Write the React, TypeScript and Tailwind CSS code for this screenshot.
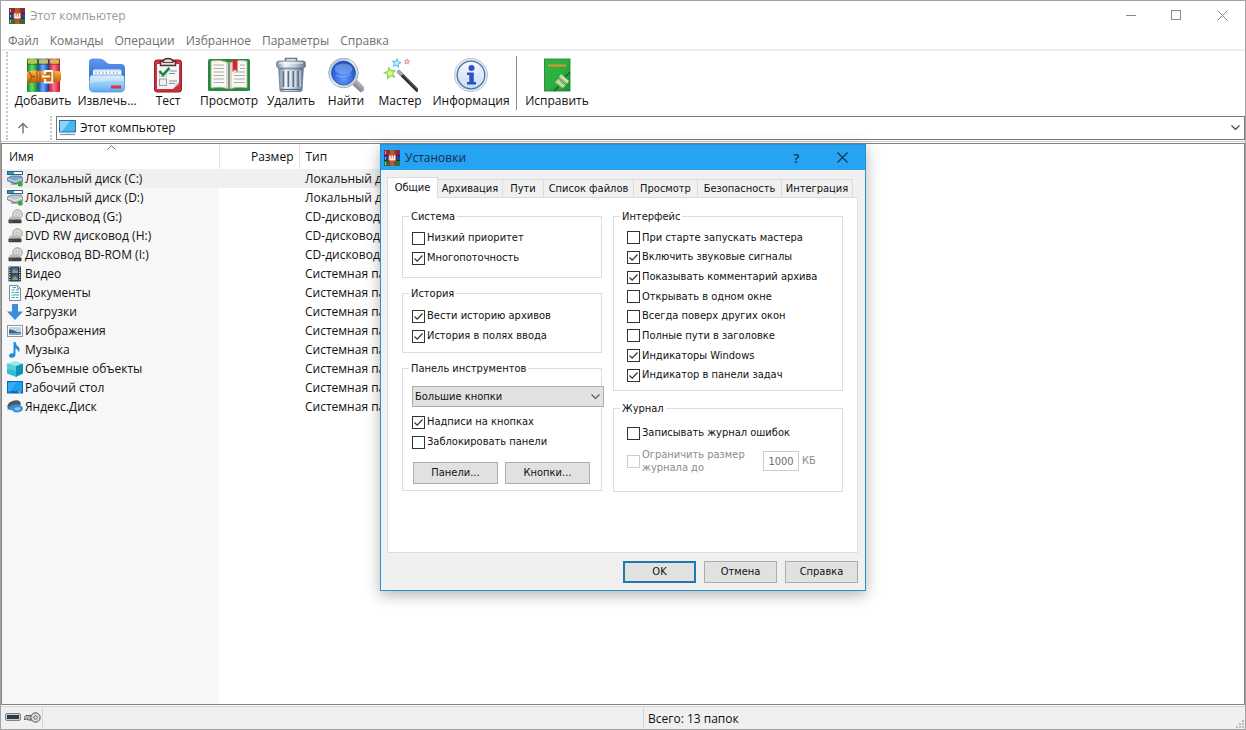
import React, { ReactNode, useState } from "react";

function BooksIcon({ className }: { className: string }) {
  return (
    <svg viewBox="0 0 36 36" className={className} aria-hidden="true">
      <defs>
        <linearGradient id="bkG"><stop offset="0" stopColor="#0f8426" /><stop offset=".45" stopColor="#5fe070" /><stop offset="1" stopColor="#0f7a24" /></linearGradient>
        <linearGradient id="bkB"><stop offset="0" stopColor="#174bb0" /><stop offset=".45" stopColor="#6aaef8" /><stop offset="1" stopColor="#123a9a" /></linearGradient>
        <linearGradient id="bkR"><stop offset="0" stopColor="#c41c38" /><stop offset=".45" stopColor="#ff7484" /><stop offset="1" stopColor="#bd142e" /></linearGradient>
        <linearGradient id="bkS" x2="0" y2="1"><stop offset="0" stopColor="#f9bf5c" /><stop offset=".5" stopColor="#e8871c" /><stop offset="1" stopColor="#b96010" /></linearGradient>
      </defs>
      <rect x="2" y="1.500" width="11" height="33.500" rx="1" fill="url(#bkG)" />
      <rect x="13" y="1.500" width="11" height="33.500" rx="1" fill="url(#bkB)" />
      <rect x="24" y="1.500" width="11" height="33.500" rx="1" fill="url(#bkR)" />
      <g fill="#cdbf4a">
        <rect x="3" y="2.500" width="9" height="4" /><rect x="14" y="2.500" width="9" height="4" /><rect x="25" y="2.500" width="9" height="4" />
      </g>
      <path d="M2 7.500H35" stroke="#1a3a30" strokeWidth="1" opacity=".4" />
      <path d="M2 15Q8 12 13 14H33Q36 14 36 18V22Q36 25 33 25H13Q8 27 2 25Z" fill="url(#bkS)" />
      <path d="M4 15Q9 20 4 25M12 14V25M15 14V25" fill="none" stroke="#a8560c" strokeWidth="1.200" />
      <circle cx="8.500" cy="19.500" r="1" fill="#7a3c06" />
      <path d="M20 17V14H27.500V25.500H20V22" fill="#c46c16" stroke="#f8f4ee" strokeWidth="2.200" />
      <path d="M17 19.500H25" stroke="#fff6dc" strokeWidth="2" />
      <path d="M28.800 13.500V26" stroke="#6f4318" strokeWidth=".6" />
    </svg>
  );
}

function AppIcon() {
  return (
    <svg viewBox="0 0 16 16" className="size-4 shrink-0" aria-hidden="true">
      <rect width="16" height="5.500" fill="#8e2440" />
      <rect y="5.500" width="16" height="5" fill="#2b3f98" />
      <rect y="10.500" width="16" height="5.500" fill="#1e7340" />
      <path d="M0 5.500H16M0 10.500H16" stroke="#2a1530" strokeWidth=".8" />
      <path d="M1.500 1V4.500M1.500 7V9.500M1.500 12V15" stroke="#d8c8c0" strokeWidth=".8" />
      <rect x="5" width="6.500" height="16" fill="#a85f33" />
      <path d="M5.500 0V16M11 0V16" stroke="#64301c" strokeWidth=".7" />
      <rect x="4.500" y="4.500" width="7.500" height="6.500" rx="1" fill="#d86a32" />
      <path d="M6 5.500V9.500H10.500V5.500M8.250 6V9.500" fill="none" stroke="#fff" strokeWidth="1.300" />
    </svg>
  );
}

function ExtractIcon() {
  return (
    <svg viewBox="0 0 36 36" className="size-9" aria-hidden="true">
      <defs>
        <linearGradient id="fo1" x2="0" y2="1"><stop offset="0" stopColor="#5c9af0" /><stop offset="1" stopColor="#3468d0" /></linearGradient>
        <linearGradient id="fo2" x2="0" y2="1"><stop offset="0" stopColor="#c8e6fc" /><stop offset=".5" stopColor="#95cdf8" /><stop offset="1" stopColor="#5fa9f0" /></linearGradient>
      </defs>
      <path d="M0 5Q0 1.500 4 1.500H10Q14 1.500 16 4Q18 7 21 7H32Q36 7 36 11V24H0Z" fill="url(#fo1)" />
      <path d="M4 14Q4 12.500 5.500 12.500H31Q32.500 12.500 32.500 14V22H4Z" fill="#f6faff" />
      <path d="M6.500 15.500H31" stroke="#7f93b4" strokeWidth="2" strokeDasharray="1 2.500" />
      <path d="M5 13.500H32" stroke="#cfdcee" strokeWidth=".8" />
      <path d="M.500 21Q.500 18 3.500 18H32.500Q35.500 18 35.500 21V31Q35.500 35 31 35H5Q.500 35 .500 31Z" fill="url(#fo2)" stroke="#4a8fe0" strokeWidth=".7" />
      <path d="M1 26Q18 23 35 24V20Q35 18.500 32.500 18.500H3.500Q1 18.500 1 21Z" fill="#fff" opacity=".3" />
      <rect x="22" y="28.500" width="10" height="3" fill="#d9363c" />
    </svg>
  );
}

function TestIcon() {
  return (
    <svg viewBox="0 0 36 36" className="size-9" aria-hidden="true">
      <rect x="4.500" y="3" width="27" height="32" rx="2.500" fill="#c8323c" stroke="#96202b" />
      <path d="M7 7H29V25L23 32H7Z" fill="#f6f6f8" />
      <path d="M29 25Q25 26 25 30L23 32L29 27Z" fill="#c4c4ce" />
      <path d="M10.500 8.500V4.500H13Q14 1.500 18 1.500T23 4.500H25.500V8.500Z" fill="#e2dcdc" stroke="#5a3034" strokeWidth="1.400" />
      <path d="M13 5.500H23" stroke="#6b4044" strokeWidth="1" />
      <path d="M9.500 13.500V19.500H16.500V17" fill="none" stroke="#b7bcc4" strokeWidth=".8" />
      <path d="M9.500 14L13 18L19.500 11" fill="none" stroke="#1c8a48" strokeWidth="2.600" />
      <rect x="9.500" y="22" width="7" height="6.500" fill="#f0f0f0" stroke="#9a9ea6" strokeWidth="1" />
      <path d="M20 14H27M19 16.500H25M19 24H27M19 26.500H25" stroke="#8a8e9c" strokeWidth="1" />
    </svg>
  );
}

function ViewIcon() {
  return (
    <svg viewBox="0 0 42 36" className="h-9 w-11" aria-hidden="true">
      <path d="M0 4Q0 2 2 2H40Q42 2 42 4V33Q42 34 40 34H2Q0 34 0 33Z" fill="#258a3c" />
      <path d="M3 4Q13 2 21 6Q29 2 39 4V31Q29 29 21 32Q13 29 3 31Z" fill="#f8f8f2" stroke="#a9ad9c" strokeWidth=".8" />
      <path d="M21 6V32" stroke="#5d6254" strokeWidth="1.400" />
      <path d="M19 6V31M23 6V31" stroke="#cfd2c4" strokeWidth="1.600" />
      <path d="M5.500 8H16M5.500 11.500H16M5.500 15H16M5.500 18.500H16M5.500 22H16M5.500 25.500H16M26 15H37M26 18.500H37M26 22H37M26 25.500H37M32 8H37M32 11.500H37" stroke="#aeb0b0" strokeWidth="1.100" />
      <path d="M24.500 2.500H29.500V15L27 12.500L24.500 15Z" fill="#cc2a2e" />
    </svg>
  );
}

function DeleteIcon() {
  return (
    <svg viewBox="0 0 36 36" className="size-9" aria-hidden="true">
      <defs>
        <linearGradient id="tr1"><stop offset="0" stopColor="#7a8ba2" /><stop offset=".3" stopColor="#f0f5fa" /><stop offset=".65" stopColor="#bccad9" /><stop offset="1" stopColor="#65758d" /></linearGradient>
      </defs>
      <path d="M12.500 4V1.500H23.500V4" fill="none" stroke="#70797f" strokeWidth="1.600" />
      <path d="M5.500 9H30.500L29 33Q29 34.500 27 34.500H9Q7 34.500 7 33Z" fill="url(#tr1)" stroke="#66768d" strokeWidth=".8" />
      <path d="M10.500 14V30M15.500 14V30M20.500 14V30M25.500 14V30" stroke="#5d6e86" strokeWidth="2" />
      <path d="M12 14V30M17 14V30M22 14V30M27 14V30" stroke="#f4f8fb" strokeWidth=".9" />
      <path d="M7 12H29" stroke="#51617a" strokeWidth="1.200" opacity=".6" />
      <rect x="3.500" y="4" width="29" height="7" rx="2.500" fill="url(#tr1)" stroke="#66768d" strokeWidth=".8" />
      <path d="M6 6H30" stroke="#fff" strokeWidth="1.200" opacity=".8" />
      <path d="M7.500 32.500H28.500" stroke="#56667c" strokeWidth="1.200" />
    </svg>
  );
}

function FindIcon() {
  return (
    <svg viewBox="0 0 36 36" className="size-9" aria-hidden="true">
      <defs>
        <radialGradient id="ln" cx=".5" cy=".75" r=".7"><stop offset="0" stopColor="#5f9af8" /><stop offset=".6" stopColor="#3067dc" /><stop offset="1" stopColor="#2350b8" /></radialGradient>
        <linearGradient id="hn" x1="1" x2="0" y2="1"><stop offset="0" stopColor="#eeeeef" /><stop offset=".5" stopColor="#9a9ca0" /><stop offset="1" stopColor="#4c4e52" /></linearGradient>
        <linearGradient id="rg" x2="1" y2="1"><stop offset="0" stopColor="#8db6de" /><stop offset=".5" stopColor="#f2f6fa" /><stop offset="1" stopColor="#b4bec8" /></linearGradient>
      </defs>
      <path d="M24 27L28.500 23L36.500 31Q36 34 32.500 35Z" fill="url(#hn)" stroke="#77797e" strokeWidth=".6" />
      <circle cx="15.500" cy="16" r="14.800" fill="url(#rg)" stroke="#8aa4bd" strokeWidth=".8" />
      <circle cx="15.500" cy="16" r="12" fill="url(#ln)" stroke="#3a5f9c" strokeWidth=".9" />
      <ellipse cx="15.500" cy="12" rx="9" ry="5.500" fill="#a8c8fc" opacity=".45" />
      <path d="M8 18Q15 22 23 17" stroke="#9cc0fa" strokeWidth="1" fill="none" opacity=".7" />
    </svg>
  );
}

function WizardIcon() {
  const star = "M0 -6L1.700 -2.100L6 -1.700L2.800 1.200L3.800 5.400L0 3.200L-3.800 5.400L-2.800 1.200L-6 -1.700L-1.700 -2.100Z";
  return (
    <svg viewBox="0 0 36 36" className="size-9" aria-hidden="true">
      <path d="M16 14L36 34" stroke="#2c2d31" strokeWidth="3.600" />
      <path d="M17.500 14L36.500 33" stroke="#85878d" strokeWidth=".9" />
      <path d="M15.500 13.500L20 18" stroke="#a6a8ad" strokeWidth="3.600" />
      <path d={star} transform="translate(8 16) rotate(-12) scale(.9)" fill="#d4f59a" stroke="#86cf48" strokeWidth="1.200" />
      <path d={star} transform="translate(14.500 6) rotate(10) scale(.68)" fill="#c6f0ff" stroke="#58bfe8" strokeWidth="1.400" />
      <path d={star} transform="translate(25 4.500) rotate(8) scale(.45)" fill="#ffdada" stroke="#e48683" strokeWidth="1.800" />
    </svg>
  );
}

function InfoIcon() {
  return (
    <svg viewBox="0 0 36 36" className="size-9" aria-hidden="true">
      <defs><linearGradient id="inf" x2="0" y2="1"><stop offset="0" stopColor="#f6fafe" /><stop offset="1" stopColor="#c6daf4" /></linearGradient></defs>
      <circle cx="18" cy="18" r="16.500" fill="#dde8f6" stroke="#b4c8e4" strokeWidth="1" />
      <circle cx="18" cy="18" r="13.800" fill="url(#inf)" stroke="#54719f" strokeWidth="1.300" />
      <circle cx="18.500" cy="11" r="3" fill="#2e50c0" />
      <path d="M14 15.500H20.800V25H23V27.500H14V25H16.300V18H14Z" fill="#2e50c0" />
    </svg>
  );
}

function RepairIcon() {
  return (
    <svg viewBox="0 0 36 36" className="size-9" aria-hidden="true">
      <defs><linearGradient id="rp" y2="1"><stop offset="0" stopColor="#35b33c" /><stop offset=".5" stopColor="#2cb040" /><stop offset="1" stopColor="#1c9232" /></linearGradient></defs>
      <rect x="5.500" y="2" width="25.500" height="32" fill="url(#rp)" stroke="#177d2b" strokeWidth=".8" />
      <path d="M9 8.500H27" stroke="#e0962a" strokeWidth="2" />
      <path d="M31 15L26 20M20 29L15 34" stroke="#0c6420" strokeWidth="1.200" />
      <path d="M22 17L30 24L27.500 27.500L19.500 20.500Z" fill="#d3dba8" />
      <path d="M18.500 22.500L26 29L23.500 31.500L16 25.500Z" fill="#d3dba8" />
      <path d="M20 19.800L28 26.800M16.500 25L24 31" stroke="#6f8f4a" strokeWidth=".8" />
      <path d="M19 22L26.500 28.500" stroke="#eef2d0" strokeWidth=".8" />
    </svg>
  );
}

const tools: { label: string; width: string; icon: ReactNode }[] = [
  { label: "Добавить", width: "w-[62px]", icon: <BooksIcon className="size-9" /> },
  { label: "Извлечь...", width: "w-[66px]", icon: <ExtractIcon /> },
  { label: "Тест", width: "w-14", icon: <TestIcon /> },
  { label: "Просмотр", width: "w-[66px]", icon: <ViewIcon /> },
  { label: "Удалить", width: "w-[58px]", icon: <DeleteIcon /> },
  { label: "Найти", width: "w-[52px]", icon: <FindIcon /> },
  { label: "Мастер", width: "w-14", icon: <WizardIcon /> },
  { label: "Информация", width: "w-[86px]", icon: <InfoIcon /> },
];

function Tool({ label, width, icon }: { label: string; width: string; icon: ReactNode }) {
  return (
    <button type="button" className={`flex shrink-0 flex-col items-center gap-0 whitespace-nowrap ${width}`}>
      {icon}
      <span className="leading-4">{label}</span>
    </button>
  );
}

function HardDisk({ tint }: { tint: string }) {
  return (
    <svg viewBox="0 0 16 16" className="size-4 shrink-0" aria-hidden="true">
      <rect x=".5" y=".5" width="15" height="3" fill="#fff" stroke="#35607e" />
      <rect x="1" y="1" width="6" height="2" fill="#2495d6" />
      <path d="M0 7.500L4 5H14L16 7.500V10L12 12.500H7L0 9.500Z" fill={tint} stroke="#586c7c" strokeWidth=".8" />
      <path d="M1 8L8 10.500L15 8" stroke="#e4eef4" strokeWidth=".8" fill="none" />
      <path d="M4 13H10" stroke="#5f6d77" strokeWidth="1" />
      <circle cx="13.200" cy="13" r="2.600" fill="#2fae3c" />
    </svg>
  );
}

function Disc() {
  return (
    <svg viewBox="0 0 16 16" className="size-4 shrink-0" aria-hidden="true">
      <circle cx="10.500" cy="5.500" r="4.700" fill="#dcdcdc" stroke="#8d8d8d" strokeWidth=".9" />
      <circle cx="10.500" cy="5.500" r="1.500" fill="#fff" stroke="#8d8d8d" strokeWidth=".7" />
      <path d="M3 7.500H12L14.500 10.500H1.500Z" fill="#b4b4b4" opacity=".85" />
      <rect x="1.500" y="10.500" width="13" height="3.700" rx=".6" fill="#3f4143" />
      <path d="M3.500 12.500H4.500" stroke="#46d060" strokeWidth="1" />
    </svg>
  );
}

const small = "size-4 shrink-0";
const icons: Record<string, ReactNode> = {
  c: <HardDisk tint="#7fa9c8" />,
  d: <HardDisk tint="#c4c8cb" />,
  disc: <Disc />,
  video: (
    <svg viewBox="0 0 16 16" className={small} aria-hidden="true">
      <rect x="1.500" y=".5" width="12.500" height="15" fill="#2b3038" />
      <path d="M2.800 1V16M12.700 1V16" stroke="#e2e6ea" strokeWidth="1.200" strokeDasharray="1.300 1.100" />
      <rect x="4.500" y="1.500" width="6.500" height="6" fill="#3d6fb6" />
      <rect x="4.500" y="8.500" width="6.500" height="6" fill="#35629e" />
      <path d="M5 6L7 3L9 5L11 4V7H5ZM5 13L8 10L11 13V14H5Z" fill="#9a9a55" />
    </svg>
  ),
  docs: (
    <svg viewBox="0 0 16 16" className={small} aria-hidden="true">
      <path d="M2.500 .5H10.500L13.500 3.500V15.500H2.500Z" fill="#fff" stroke="#7d8a92" />
      <path d="M10.500 .5V3.500H13.500" fill="none" stroke="#7d8a92" strokeWidth=".8" />
      <path d="M5.500 2.500H9M4.500 5H8M9 5H12M4.500 7.500H7M8 7.500H12M4.500 10H12M4.500 12.500H8M9 12.500H11.500" stroke="#38a1c6" strokeWidth="1.200" />
    </svg>
  ),
  down: (
    <svg viewBox="0 0 16 16" className={small} aria-hidden="true">
      <path d="M5 0H11V7.500H16L8 16L0 7.500H5Z" fill="#3b8edb" />
    </svg>
  ),
  pics: (
    <svg viewBox="0 0 16 16" className={small} aria-hidden="true">
      <rect x=".5" y="2.500" width="15" height="11" fill="#fff" stroke="#8d979e" />
      <rect x="2" y="4" width="12" height="8" fill="#b4d8ee" />
      <path d="M2 6.500Q5 6 8 8T14 9V10.500H2Z" fill="#3c6381" />
      <path d="M2 10.500H14V12H2Z" fill="#76a6c8" />
    </svg>
  ),
  music: (
    <svg viewBox="0 0 16 16" className={small} aria-hidden="true">
      <path d="M6.500 0H8.500Q9 3 11 4.500Q14 7 11.500 11Q12 7.500 8.500 6.500V13Q8 15.800 5 15.800Q2 15.800 2 13.500Q2.500 11 6.500 11.200Z" fill="#1f8fdd" />
    </svg>
  ),
  cube: (
    <svg viewBox="0 0 16 16" className={small} aria-hidden="true">
      <path d="M0 2.500L8 0L16 2.500L9 5Z" fill="#9ce8ee" />
      <path d="M0 2.500L9 5V16L0 12.500Z" fill="#32bdd2" />
      <path d="M9 5L16 2.500V12.500L9 16Z" fill="#0f93b4" />
      <path d="M0 2.500L9 5V10L0 8Z" fill="#6fd8e2" opacity=".6" />
    </svg>
  ),
  desk: (
    <svg viewBox="0 0 16 16" className={small} aria-hidden="true">
      <rect x=".5" y="1.500" width="15" height="11.500" fill="#1b9ff0" stroke="#1468a8" />
      <path d="M1 3L10 2L3 12H1Z" fill="#49b8fa" opacity=".6" />
      <path d="M1 12H15" stroke="#0b4f85" strokeWidth="1.200" />
      <path d="M2 12H3M11 12H14" stroke="#d7efff" strokeWidth=".9" />
    </svg>
  ),
  yandex: (
    <svg viewBox="0 0 16 16" className={small} aria-hidden="true">
      <ellipse cx="7" cy="6" rx="7" ry="4.300" fill="#4a5864" transform="rotate(-22 7 6)" />
      <path d="M0 11Q2 6 8 5.500Q15 5 16 9.500Q15.500 13.500 9 13.500Q7 13.500 5.500 11.500Q3 10 0 11Z" fill="#3f8edb" />
      <path d="M7 9.500Q10 7.500 13.500 8.500Q14 11 10.500 11.500Q7.500 11.500 7 9.500Z" fill="#8fc2f0" />
    </svg>
  ),
};

const rows: [string, string, string][] = [
  ["c", "Локальный диск (C:)", "Локальный диск"],
  ["d", "Локальный диск (D:)", "Локальный диск"],
  ["disc", "CD-дисковод (G:)", "CD-дисковод"],
  ["disc", "DVD RW дисковод (H:)", "CD-дисковод"],
  ["disc", "Дисковод BD-ROM (I:)", "CD-дисковод"],
  ["video", "Видео", "Системная папка"],
  ["docs", "Документы", "Системная папка"],
  ["down", "Загрузки", "Системная папка"],
  ["pics", "Изображения", "Системная папка"],
  ["music", "Музыка", "Системная папка"],
  ["cube", "Объемные объекты", "Системная папка"],
  ["desk", "Рабочий стол", "Системная папка"],
  ["yandex", "Яндекс.Диск", "Системная папка"],
];

function FileTable() {
  return (
    <table className="h-full w-full table-fixed border-collapse text-left">
      <colgroup>
        <col className="w-[217px]" />
        <col className="w-20" />
        <col className="w-44" />
        <col />
      </colgroup>
      <thead>
        <tr className="h-[25px]">
          <th className="relative border-r border-[#e3e3e3] p-0 pl-[7px] font-normal">
            Имя
            <svg viewBox="0 0 9 5" className="absolute left-[105px] top-px h-[5px] w-[9px]" aria-hidden="true">
              <path d="M.5 4.500L4.500 .7L8.500 4.500" fill="none" stroke="#6b6b6b" />
            </svg>
          </th>
          <th className="border-r border-[#e3e3e3] p-0 pr-[5px] text-right font-normal">Размер</th>
          <th className="p-0 pl-[6px] font-normal">Тип</th>
          <td />
        </tr>
      </thead>
      <tbody>
        {rows.map(([icon, name, type], i) => (
          <tr key={name} className="h-[19px]">
            <td className={`p-0 ${i === 0 ? "bg-[#f0f0f0]" : "bg-[#f7f7f7]"}`}>
              <div className="flex h-[19px] items-center gap-[2px] whitespace-nowrap pl-[5px]">
                {icons[icon]}
                {name}
              </div>
            </td>
            <td className={`p-0 ${i === 0 ? "bg-[#f0f0f0]" : ""}`} />
            <td className={`truncate p-0 pl-[6px] leading-[19px] ${i === 0 ? "bg-[#f0f0f0]" : ""}`}>{type}</td>
            <td />
          </tr>
        ))}
        <tr className="h-full">
          <td className="bg-[#f7f7f7]" />
          <td colSpan={3} />
        </tr>
      </tbody>
    </table>
  );
}

function Check({ label, checked = false }: { label: string; checked?: boolean }) {
  const [on, setOn] = useState(checked);
  return (
    <label className="flex h-5 items-center gap-[2px] whitespace-nowrap">
      <span className="grid size-[13px] shrink-0 place-items-center">
        <input
          type="checkbox"
          checked={on}
          onChange={() => setOn(!on)}
          className="col-start-1 row-start-1 size-[13px] appearance-none border border-[#333] bg-white"
        />
        {on && (
          <svg viewBox="0 0 13 13" className="pointer-events-none col-start-1 row-start-1 size-[13px]" aria-hidden="true">
            <path d="M2.500 6.500L5.200 9.200L10.500 3.500" fill="none" stroke="#333" strokeWidth="1.200" />
          </svg>
        )}
      </span>
      {label}
    </label>
  );
}

function Group({ title, className, legend, children }: { title: string; className: string; legend: string; children: ReactNode }) {
  return (
    <fieldset className={`min-w-0 border border-[#dcdcdc] ${className}`}>
      <legend className={`h-[14px] px-[2px] leading-4 ${legend}`}>{title}</legend>
      {children}
    </fieldset>
  );
}

const pushButton = "h-[22px] border border-[#adadad] bg-[#e1e1e1] text-center";

const tabs: [string, string][] = [
  ["Архивация", "w-[65px]"],
  ["Пути", "w-[41px]"],
  ["Список файлов", "w-[90px]"],
  ["Просмотр", "w-16"],
  ["Безопасность", "w-[84px]"],
  ["Интеграция", "w-[71px]"],
];

const options: [string, boolean][] = [
  ["При старте запускать мастера", false],
  ["Включить звуковые сигналы", true],
  ["Показывать комментарий архива", true],
  ["Открывать в одном окне", false],
  ["Всегда поверх других окон", false],
  ["Полные пути в заголовке", false],
  ["Индикаторы Windows", true],
  ["Индикатор в панели задач", true],
];

function SettingsDialog() {
  return (
    <div
      role="dialog"
      aria-label="Установки"
      className="w-[486px] border border-[#2a8fd0] bg-[#f0f0f0] font-['DejaVu_Sans_Condensed','DejaVu_Sans',sans-serif] text-[11px] shadow-[0_4px_14px_rgba(0,0,0,0.3)]"
    >
      <div className="flex h-[25px] items-center bg-[#26a3f3] pl-[3px] font-['Open_Sans',sans-serif] text-[12px]">
        <AppIcon />
        <span className="ml-[5px] flex-1 text-[#0f2f4c]">Установки</span>
        <button type="button" aria-label="Помощь" className="w-[45px] text-[13px] font-semibold text-[#12334e]">?</button>
        <button type="button" aria-label="Закрыть" className="flex w-[46px] justify-center">
          <svg viewBox="0 0 11 11" className="size-[11px]" aria-hidden="true"><path d="M.5 .5L10.500 10.500M10.500 .5L.5 10.500" stroke="#12334e" strokeWidth="1.100" /></svg>
        </button>
      </div>
      <div className="pb-[7px] pl-[6px] pr-[7px] pt-[7px]">
        <div role="tablist" className="flex h-5 items-end">
          <button type="button" role="tab" aria-selected="true" className="z-10 -mb-px h-[21px] w-[51px] border border-b-0 border-[#dcdcdc] bg-white">Общие</button>
          {tabs.map(([name, width]) => (
            <button key={name} type="button" role="tab" aria-selected="false" className={`h-[18px] whitespace-nowrap border-r border-t border-[#dcdcdc] pt-px ${width}`}>{name}</button>
          ))}
        </div>
        <div className="flex h-[356px] items-start gap-[11px] border border-[#dcdcdc] bg-white pl-[14px] pt-[11px]">
          <div className="w-[200px] space-y-2">
            <Group title="Система" className="pb-[9px] pl-[9px]" legend="-ml-[3px]">
              <div className="pt-[5px]">
                <Check label="Низкий приоритет" />
                <Check label="Многопоточность" checked />
              </div>
            </Group>
            <Group title="История" className="pb-[6px] pl-[9px]" legend="-ml-[3px]">
              <div className="pt-[6px]">
                <Check label="Вести историю архивов" checked />
                <Check label="История в полях ввода" checked />
              </div>
            </Group>
            <Group title="Панель инструментов" className="pb-[6px] pl-[9px]" legend="-ml-[3px]">
              <div className="pt-[11px]">
                <div className="relative mb-[5px] w-48">
                  <select aria-label="Размер кнопок" className="h-[21px] w-full appearance-none border border-[#adadad] bg-[#e1e1e1] px-[2px]">
                    <option>Большие кнопки</option>
                    <option>Маленькие кнопки</option>
                  </select>
                  <svg viewBox="0 0 9 6" className="pointer-events-none absolute right-1 top-2 h-[6px] w-[9px]" aria-hidden="true"><path d="M.5 .5L4.500 4.500L8.500 .5" fill="none" stroke="#555" strokeWidth="1.100" /></svg>
                </div>
                <Check label="Надписи на кнопках" checked />
                <Check label="Заблокировать панели" />
                <div className="mt-[10px] flex gap-[7px] pl-px">
                  <button type="button" className={`w-[85px] ${pushButton}`}>Панели...</button>
                  <button type="button" className={`w-[85px] ${pushButton}`}>Кнопки...</button>
                </div>
              </div>
            </Group>
          </div>
          <div className="w-[230px] space-y-[10px]">
            <Group title="Интерфейс" className="pb-[5px] pl-[13px]" legend="-ml-[7px]">
              <div className="flex h-[162px] flex-col justify-between pt-[5px]">
                {options.map(([label, checked]) => (
                  <Check key={label} label={label} checked={checked} />
                ))}
              </div>
            </Group>
            <Group title="Журнал" className="pb-[17px] pl-[13px]" legend="-ml-[7px]">
              <div className="pt-2">
                <Check label="Записывать журнал ошибок" />
                <div className="mt-[5px] flex items-center text-[#8c8c8c]">
                  <label className="flex w-[136px] items-center gap-[2px] leading-[13px]">
                    <input type="checkbox" disabled className="size-[13px] shrink-0 appearance-none border border-[#ccc] bg-white" />
                    <span>Ограничить размер журнала до</span>
                  </label>
                  <input aria-label="Размер журнала, КБ" disabled defaultValue="1000" className="h-5 w-9 border border-[#ccc] bg-white px-0 text-center text-[#6d6d6d]" />
                  <span className="pl-[3px]">КБ</span>
                </div>
              </div>
            </Group>
          </div>
        </div>
        <div className="mt-2 flex justify-end gap-2">
          <button type="button" className="h-[22px] w-[73px] border-2 border-[#2277ad] bg-[#e1e1e1]">OK</button>
          <button type="button" className={`w-[73px] ${pushButton}`}>Отмена</button>
          <button type="button" className={`w-[73px] ${pushButton}`}>Справка</button>
        </div>
      </div>
    </div>
  );
}

const menu = ["Файл", "Команды", "Операции", "Избранное", "Параметры", "Справка"];

export default function App() {
  return (
    <div className="relative flex h-screen min-h-[620px] flex-col overflow-hidden border border-[#a3a3a3] bg-white font-['Open_Sans','Noto_Sans',sans-serif] text-[12px] leading-4 text-[#111]">
      <header className="flex h-[29px] items-center pl-2 text-[#9a9a9a]">
        <AppIcon />
        <h1 className="ml-[5px] flex-1">Этот компьютер</h1>
        <button type="button" aria-label="Свернуть" className="flex w-[46px] justify-center">
          <svg viewBox="0 0 11 11" className="size-[11px]" aria-hidden="true"><path d="M0 5.500H10" stroke="#8a8a8a" /></svg>
        </button>
        <button type="button" aria-label="Развернуть" className="flex w-[45px] justify-center">
          <svg viewBox="0 0 11 11" className="size-[11px]" aria-hidden="true"><rect x=".5" y=".5" width="9" height="9" fill="none" stroke="#8a8a8a" /></svg>
        </button>
        <button type="button" aria-label="Закрыть" className="flex w-[46px] justify-center">
          <svg viewBox="0 0 11 11" className="size-[11px]" aria-hidden="true"><path d="M.5 .5L10.500 10.500M10.500 .5L.5 10.500" stroke="#8a8a8a" /></svg>
        </button>
      </header>

      <nav className="flex h-[21px] items-center gap-[11px] border-b-2 border-[#eee] pl-[7px] pt-[2px] text-[#6e6e6e]">
        {menu.map((m) => (
          <button key={m} type="button">{m}</button>
        ))}
      </nav>

      <div className="flex h-[91px] border-b border-[#ccc] pl-[5px]">
        <div className="my-px w-0 border-l-2 border-dotted border-[#c4c4c4]" />
        <div className="flex min-w-0 flex-1 flex-col">
          <div className="flex h-[65px] items-start pl-1 pt-[6px]">
            {tools.map((t) => (
              <Tool key={t.label} {...t} />
            ))}
            <div className="-mt-px ml-[2px] mr-[5px] h-[54px] w-px bg-[#8b8b8b]" />
            <Tool label="Исправить" width="w-[70px]" icon={<RepairIcon />} />
          </div>
          <div className="flex h-6 items-stretch">
            <button type="button" aria-label="Вверх" className="flex w-[30px] items-center justify-center">
              <svg viewBox="0 0 12 12" className="size-3" aria-hidden="true"><path d="M6 11.500V1.500M1.500 6L6 1.500L10.500 6" fill="none" stroke="#7a7a7a" strokeWidth="1.500" /></svg>
            </button>
            <div className="ml-3 w-0 border-l-2 border-dotted border-[#c4c4c4]" />
            <div className="ml-1 flex flex-1 items-center border border-[#7a7a7a] pl-[2px]">
              <svg viewBox="0 0 17 16" className="h-4 w-[17px] shrink-0" aria-hidden="true">
                <rect x=".5" y=".5" width="16" height="11.500" fill="#48b5f0" stroke="#2f6f9c" />
                <path d="M1 1H11L3 11.500H1Z" fill="#8ad4fa" />
                <path d="M1 14.500H16" stroke="#7795ab" strokeWidth="1.200" />
                <path d="M6 13H11" stroke="#a9c5d8" />
              </svg>
              <select aria-label="Адрес" className="h-full flex-1 appearance-none pl-[4px]">
                <option>Этот компьютер</option>
              </select>
              <svg viewBox="0 0 9 6" className="pointer-events-none mr-1 h-[6px] w-[9px]" aria-hidden="true"><path d="M.5 .5L4.500 4.500L8.500 .5" fill="none" stroke="#444" strokeWidth="1.200" /></svg>
            </div>
          </div>
        </div>
      </div>

      <main className="mt-px min-h-0 flex-1 overflow-hidden border border-[#828282]">
        <FileTable />
      </main>

      <footer className="mt-px flex h-[23px] items-stretch border-t border-[#d4d4d4] bg-[#f0f0f0] py-px">
        <div className="flex w-[42px] items-center gap-[3px] border-r border-[#d4d4d4] pb-[2px] pl-1">
          <svg viewBox="0 0 16 8" className="h-2 w-4" aria-hidden="true">
            <rect x=".5" y=".5" width="15" height="7" rx="1.500" fill="#c9d0d3" stroke="#7b858a" />
            <rect x="2" y="2" width="12" height="4" fill="#2f3c42" />
          </svg>
          <svg viewBox="0 0 17 11" className="h-[11px] w-[17px]" aria-hidden="true">
            <path d="M8 3.500H2L0 5.500V7.500H2L3 6.500L4 8H8Z" fill="#b9b9b9" stroke="#4a4a4a" strokeWidth=".9" />
            <circle cx="11.500" cy="5.500" r="4.700" fill="#dadada" stroke="#555" strokeWidth="1" />
            <circle cx="11.500" cy="5.500" r="1.600" fill="#fff" stroke="#555" strokeWidth="1" />
          </svg>
        </div>
        <div className="flex-1 border-r border-[#d4d4d4]" />
        <div className="flex w-[601px] items-center justify-between pl-1">
          <span className="pt-px">Всего: 13 папок</span>
          <svg viewBox="0 0 8 8" className="mr-px size-2 self-end" fill="#bcbcbc" aria-hidden="true">
            <path d="M6 0h2v2h-2zM3 3h2v2h-2zM6 3h2v2h-2zM0 6h2v2h-2zM3 6h2v2h-2zM6 6h2v2h-2z" />
          </svg>
        </div>
      </footer>

      <div className="pointer-events-none absolute inset-x-0 top-[143px] flex justify-center">
        <div className="pointer-events-auto">
          <SettingsDialog />
        </div>
      </div>
    </div>
  );
}
